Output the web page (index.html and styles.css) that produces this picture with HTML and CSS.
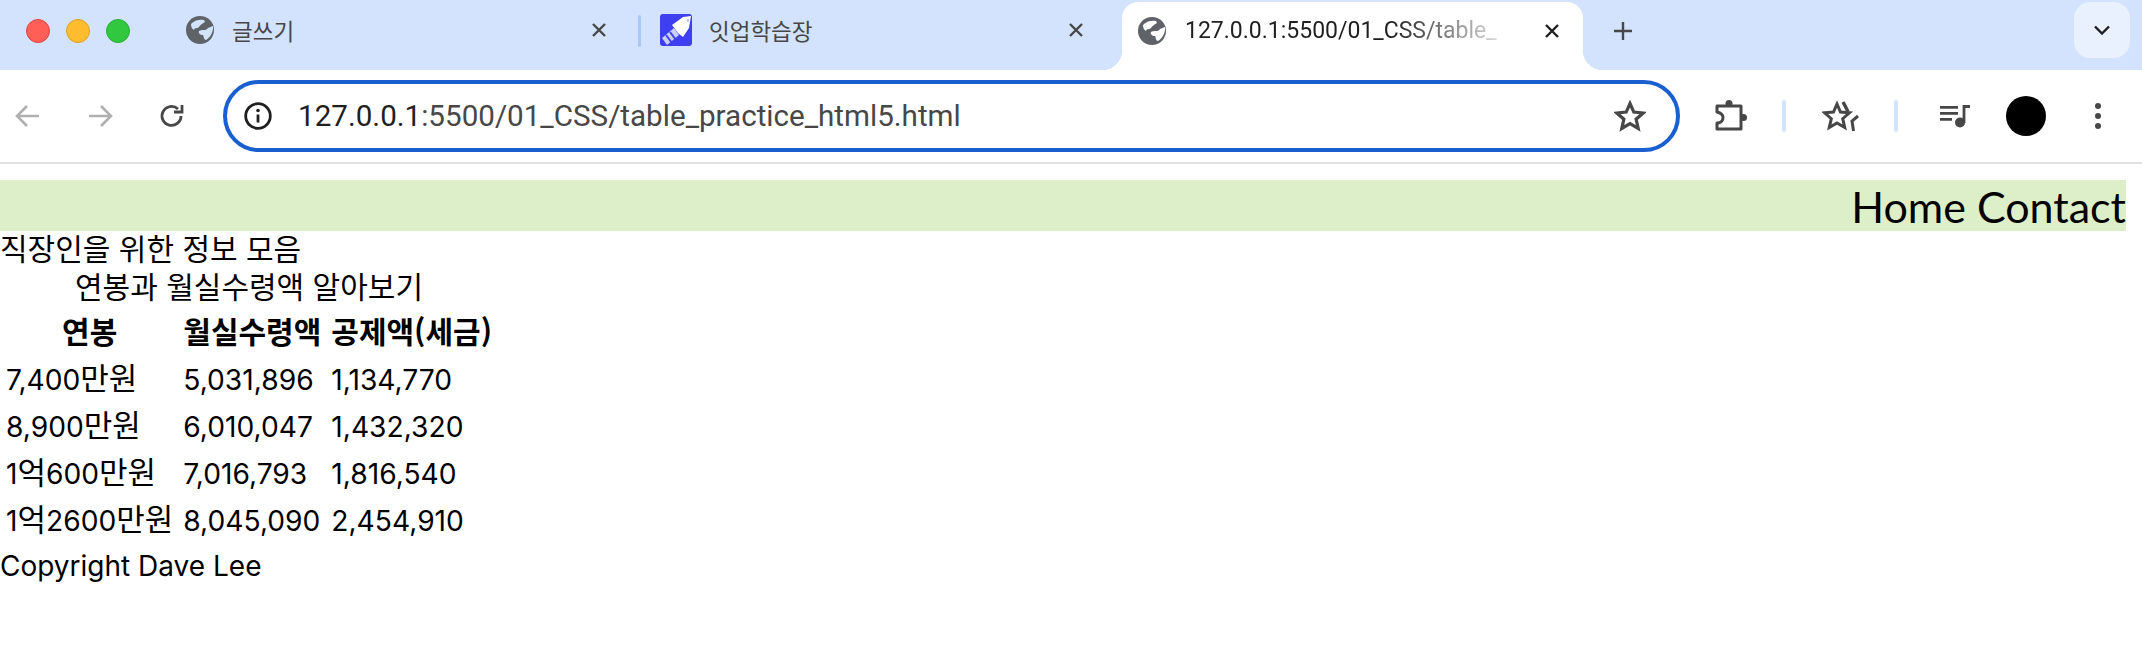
FILE: index.html
```html
<!DOCTYPE html>
<html lang="ko">
<head>
    <meta charset="utf-8">
    <title>table practice</title>
    <link rel="stylesheet" href="styles.css">
</head>
<body>
    <svg class="defs" width="0" height="0">
        <symbol id="globe" viewBox="0 0 28 28">
            <circle cx="14" cy="14" r="14" fill="#5f6368"/>
            <path d="M5 8C8 4 14 3 18 4L19 6C16 8 14 9 13 11 11 13 9 11 8 14 6 13 5 11 5 8z" fill="#d3e3fd"/>
            <path d="M27 10C27.500 15 25 21 20 24 18 24 18 21 17 19 14 19 12 17 13 15 16 13 19 15 21 13 23 11 25 11 27 10z" fill="#d3e3fd"/>
        </symbol>
        <symbol id="globeActive" viewBox="0 0 28 28">
            <circle cx="14" cy="14" r="14" fill="#5f6368"/>
            <path d="M5 8C8 4 14 3 18 4L19 6C16 8 14 9 13 11 11 13 9 11 8 14 6 13 5 11 5 8z" fill="#fff"/>
            <path d="M27 10C27.500 15 25 21 20 24 18 24 18 21 17 19 14 19 12 17 13 15 16 13 19 15 21 13 23 11 25 11 27 10z" fill="#fff"/>
        </symbol>
        <symbol id="close" viewBox="0 0 16 16">
            <path d="M2 2l12 12M14 2L2 14" fill="none" stroke="currentColor" stroke-width="2.400"/>
        </symbol>
        <symbol id="star" viewBox="0 0 32 32">
            <path d="M16 3.500l3.800 8.600 9.400.9-7.100 6.200 2.100 9.200-8.200-4.800-8.200 4.800 2.100-9.200L2.800 13l9.400-.9z" fill="none" stroke="#474747" stroke-width="3.200"/>
        </symbol>
    </svg>

    <div class="tabstrip">
        <div class="lights">
            <span class="light red"></span>
            <span class="light yellow"></span>
            <span class="light green"></span>
        </div>
        <div class="tab first">
            <svg class="fav"><use href="#globe"/></svg>
            <span class="tab-title">글쓰기</span>
            <svg class="tab-close"><use href="#close"/></svg>
        </div>
        <span class="tab-sep"></span>
        <div class="tab second">
            <svg class="fav-app" viewBox="0 0 32 32">
                <rect width="32" height="32" rx="3" fill="#3d3ff0"/>
                <path d="M23 3L31 2 29 14 23 23 18 19 12 11z" fill="#fff"/>
                <path d="M27 5l2 0 0 3-2 0z" fill="#b9c4fb"/>
                <path d="M2 24L14 14 19 21 7 31z" fill="#c8cffb"/>
                <path d="M6 21l6 8M10 18l6 8" stroke="#3d3ff0" stroke-width="2"/>
            </svg>
            <span class="tab-title">잇업학습장</span>
            <svg class="tab-close"><use href="#close"/></svg>
        </div>
        <div class="tab active">
            <svg class="fav"><use href="#globeActive"/></svg>
            <span class="tab-title">127.0.0.1:5500/01_CSS/table_</span>
            <svg class="tab-close"><use href="#close"/></svg>
        </div>
        <svg class="newtab" viewBox="0 0 20 20"><path d="M10 1v18M1 10h18" fill="none" stroke="#474747" stroke-width="2.400"/></svg>
        <div class="tabsearch">
            <svg viewBox="0 0 16 10" width="16" height="10"><path d="M1 1.500l7 7 7-7" fill="none" stroke="#1f1f1f" stroke-width="2.400"/></svg>
        </div>
    </div>

    <div class="toolbar">
        <svg class="tool back" viewBox="0 0 28 28"><path d="M25 14H4M13 4L3 14l10 10" fill="none" stroke="#b0b0b0" stroke-width="2.600"/></svg>
        <svg class="tool forward" viewBox="0 0 28 28"><path d="M3 14h21M15 4l10 10-10 10" fill="none" stroke="#b0b0b0" stroke-width="2.600"/></svg>
        <svg class="tool reload" viewBox="0 0 28 28"><path d="M23 14a9.500 9.500 0 1 1-3-7" fill="none" stroke="#474747" stroke-width="2.800"/><path d="M16 10h8V3" fill="none" stroke="#474747" stroke-width="2.800"/></svg>
        <div class="omnibox">
            <svg class="info" viewBox="0 0 28 28">
                <circle cx="14" cy="14" r="12.300" fill="none" stroke="#1f1f1f" stroke-width="2.800"/>
                <path d="M14 12.500v8" stroke="#1f1f1f" stroke-width="2.800"/>
                <circle cx="14" cy="8.500" r="1.800" fill="#1f1f1f"/>
            </svg>
            <span class="url"><b>127.0.0.1</b>:5500/01_CSS/table_practice_html5.html</span>
            <svg class="star"><use href="#star"/></svg>
        </div>
        <svg class="tool puzzle" viewBox="0 0 36 34">
            <path d="M3 7H27V30H3V24C8 24 9 20 9 18.500 9 16 7 14 3 13z" fill="none" stroke="#474747" stroke-width="3" stroke-linejoin="round"/>
            <circle cx="15" cy="4.500" r="3.500" fill="#474747"/>
            <circle cx="29.500" cy="18.500" r="3.500" fill="#474747"/>
        </svg>
        <span class="tool-sep sep-a"></span>
        <svg class="tool star-b" viewBox="0 0 38 32">
            <path d="M15 4l3.500 8 9 .8-6.800 5.900 2 8.800-7.700-4.600-7.700 4.600 2-8.800L2.500 12.800l9-.8z" fill="none" stroke="#474747" stroke-width="3"/>
            <path d="M21 2l5 9.500" fill="none" stroke="#474747" stroke-width="3.400"/>
            <path d="M36 16l-6 5 1.500 10" fill="none" stroke="#474747" stroke-width="3"/>
        </svg>
        <span class="tool-sep sep-b"></span>
        <svg class="tool media" viewBox="0 0 30 24">
            <path d="M0 3.300h18M0 9.300h18M0 15.300h12" stroke="#474747" stroke-width="2.800"/>
            <path d="M24 19V2.500h6" fill="none" stroke="#474747" stroke-width="2.800"/>
            <circle cx="20" cy="18.500" r="5" fill="#474747"/>
        </svg>
        <span class="avatar"></span>
        <svg class="tool dots" viewBox="0 0 8 28"><circle cx="4" cy="4" r="3" fill="#474747"/><circle cx="4" cy="14" r="3" fill="#474747"/><circle cx="4" cy="24" r="3" fill="#474747"/></svg>
    </div>

    <div class="page">
        <nav class="menu">Home Contact</nav>
        <div class="heading">직장인을 위한 정보 모음</div>
        <table class="salary">
            <caption>연봉과 월실수령액 알아보기</caption>
            <thead>
                <tr><th>연봉</th><th>월실수령액</th><th>공제액(세금)</th></tr>
            </thead>
            <tbody>
                <tr><td>7,400<span class="kr">만원</span></td><td>5,031,896</td><td>1,134,770</td></tr>
                <tr><td>8,900<span class="kr">만원</span></td><td>6,010,047</td><td>1,432,320</td></tr>
                <tr><td>1<span class="kr">억</span>600<span class="kr">만원</span></td><td>7,016,793</td><td>1,816,540</td></tr>
                <tr><td>1<span class="kr">억</span>2600<span class="kr">만원</span></td><td>8,045,090</td><td>2,454,910</td></tr>
            </tbody>
        </table>
        <footer class="copy">Copyright Dave Lee</footer>
    </div>
</body>
</html>
```

FILE: styles.css
```css
html, body {
	margin: 0;
	padding: 0;
	background: #fff;
}
body {
	font-family: "Noto Sans CJK KR", "Noto Sans", sans-serif;
	overflow: hidden;
}
.defs {
	display: block;
	height: 0;
}

/* tab strip */
.tabstrip {
	display: flex;
	align-items: flex-start;
	height: 70px;
	background: #d3e3fd;
}
.lights {
	display: flex;
	gap: 16px;
	padding: 19px 0 0 26px;
}
.light {
	width: 24px;
	height: 24px;
	border-radius: 50%;
	box-sizing: border-box;
}
.red { background: #ff5f57; border: 1px solid #e0443e; }
.yellow { background: #febc2e; border: 1px solid #dea123; }
.green { background: #31c840; border: 1px solid #2aac37; }

.tab {
	display: flex;
	align-items: center;
	height: 60px;
	font-size: 22.5px;
	color: #474747;
}
.first {
	width: 454px;
	margin-left: 46px;
	padding-left: 10px;
	padding-right: 17px;
	box-sizing: border-box;
}
.second {
	width: 455px;
	margin-left: 11px;
	padding-left: 8px;
	padding-right: 17px;
	box-sizing: border-box;
}
.active {
	position: relative;
	width: 461px;
	height: 68px;
	margin-top: 2px;
	margin-left: 15px;
	padding: 0 17px 11px 16px;
	box-sizing: border-box;
	background: #fff;
	border-radius: 16px 16px 0 0;
	color: #1f1f1f;
}
.active:before, .active:after {
	content: "";
	position: absolute;
	bottom: 0;
	width: 20px;
	height: 20px;
	background: #fff;
}
.active:before {
	left: -20px;
	-webkit-mask: radial-gradient(circle at 0 0, transparent 20px, #000 20.5px);
	mask: radial-gradient(circle at 0 0, transparent 20px, #000 20.5px);
}
.active:after {
	right: -20px;
	-webkit-mask: radial-gradient(circle at 100% 0, transparent 20px, #000 20.5px);
	mask: radial-gradient(circle at 100% 0, transparent 20px, #000 20.5px);
}
.fav {
	flex: none;
	width: 28px;
	height: 28px;
	margin-right: 18px;
}
.active .fav {
	margin-right: 19px;
}
.fav-app {
	flex: none;
	width: 32px;
	height: 32px;
	margin-right: 17px;
}
.tab-title {
	flex: 1;
	white-space: nowrap;
}
.active .tab-title {
	font-family: "Roboto", sans-serif;
	font-size: 23px;
	margin-right: 20px;
	-webkit-mask: linear-gradient(to right, #000 62%, transparent 100%);
	mask: linear-gradient(to right, #000 62%, transparent 100%);
}
.tab-close {
	flex: none;
	width: 16px;
	height: 16px;
	margin: 0 6px;
	color: #474747;
}
.active .tab-close {
	color: #1f1f1f;
}
.tab-sep {
	flex: none;
	width: 3px;
	height: 32px;
	margin: 15px 0 0 8px;
	background: #aac7f7;
	border-radius: 2px;
}
.newtab {
	flex: none;
	width: 20px;
	height: 20px;
	margin: 21px 0 0 30px;
}
.tabsearch {
	display: flex;
	align-items: center;
	justify-content: center;
	width: 56px;
	height: 56px;
	margin: 2px 12px 0 auto;
	background: #e9f0fe;
	border-radius: 16px;
}

/* toolbar */
.toolbar {
	display: flex;
	align-items: center;
	height: 92px;
	background: #fff;
	border-bottom: 2px solid #e1e1e1;
}
.tool {
	flex: none;
}
.back { width: 28px; height: 28px; margin-left: 14px; }
.forward { width: 28px; height: 28px; margin-left: 44px; }
.reload { width: 28px; height: 28px; margin-left: 44px; }
.omnibox {
	display: flex;
	align-items: center;
	flex: none;
	width: 1457px;
	height: 72px;
	margin-left: 37px;
	padding: 0 30px 0 17px;
	box-sizing: border-box;
	border: 4px solid #1a5fd0;
	border-radius: 36px;
}
.info {
	flex: none;
	width: 28px;
	height: 28px;
}
.url {
	flex: 1;
	margin-left: 26px;
	font-family: "Roboto", sans-serif;
	font-size: 29.6px;
	color: #474747;
	white-space: nowrap;
}
.url b {
	font-weight: normal;
	color: #1f1f1f;
}
.star {
	flex: none;
	width: 32px;
	height: 32px;
}
.puzzle { width: 36px; height: 34px; margin-left: 34px; }
.tool-sep {
	flex: none;
	width: 4px;
	height: 32px;
	background: #d3e3fd;
	border-radius: 2px;
}
.sep-a { margin-left: 32px; }
.star-b { width: 38px; height: 32px; margin-left: 36px; }
.sep-b { margin-left: 34px; }
.media { width: 30px; height: 24px; margin-left: 42px; }
.avatar {
	flex: none;
	width: 40px;
	height: 40px;
	margin-left: 36px;
	background: #000;
	border-radius: 50%;
}
.dots { width: 8px; height: 28px; margin-left: 48px; }

/* page content */
.page {
	width: 2126px;
	color: #000;
	font-size: 30px;
}
.menu {
	margin-top: 16px;
	height: 51px;
	line-height: 54px;
	background: #ddefc8;
	text-align: right;
	font-family: "Lato", sans-serif;
	font-size: 43px;
}
.heading {
	height: 37px;
	line-height: 32px;
}
.salary {
	border-spacing: 2px;
	font-size: 30px;
}
.salary caption {
	line-height: 34px;
	padding-bottom: 4px;
}
.salary th, .salary td {
	padding: 1px 4px;
	line-height: 43px;
	white-space: nowrap;
}
.salary th {
	padding-bottom: 4px;
	text-align: center;
}
.salary td {
	font-family: "Inter", "Noto Sans CJK KR", sans-serif;
	font-size: 28.2px;
	text-align: left;
}
.kr {
	font-family: "Noto Sans CJK KR", sans-serif;
	font-size: 31px;
	line-height: 1;
}
.copy {
	font-family: "Inter", sans-serif;
	font-size: 28px;
	line-height: 40px;
}
```
